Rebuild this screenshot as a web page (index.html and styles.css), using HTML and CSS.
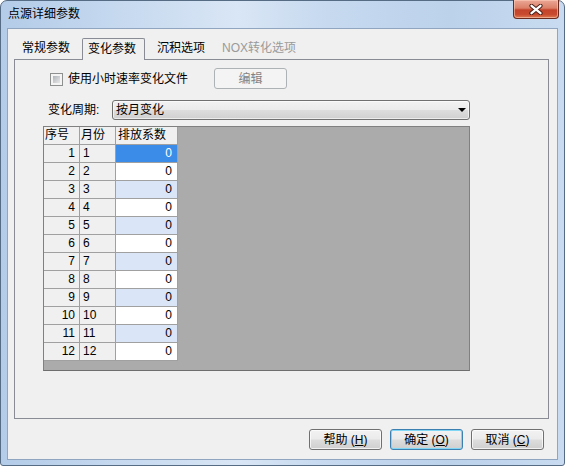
FILE: index.html
```html
<!DOCTYPE html>
<html>
<head>
<meta charset="utf-8">
<link rel="stylesheet" href="styles.css">
</head>
<body>
<div class="window">
  <div class="titlebar">
    <span class="title">点源详细参数</span>
    <div class="close">
      <svg width="14" height="11" viewBox="0 0 14 11">
        <path d="M2.5 1.8 L11.5 9.2 M11.5 1.8 L2.5 9.2" stroke="#4a1e16" stroke-width="4.2" stroke-linecap="round" fill="none"/>
        <path d="M2.5 1.8 L11.5 9.2 M11.5 1.8 L2.5 9.2" stroke="#ffffff" stroke-width="2.3" stroke-linecap="round" fill="none"/>
      </svg>
    </div>
  </div>
  <div class="client">
    <div class="tabs">
      <div class="tab t1">常规参数</div>
      <div class="tab sel">变化参数</div>
      <div class="tab t3">沉积选项</div>
      <div class="tab t4 dis">NOX转化选项</div>
    </div>
    <div class="panel">
      <div class="row1">
        <span class="check"></span>
        <span class="chklabel">使用小时速率变化文件</span>
        <div class="btn edit">编辑</div>
      </div>
      <div class="row2">
        <span class="lbl">变化周期:</span>
        <div class="combo"><span class="ctext">按月变化</span><span class="arrow"></span></div>
      </div>
      <div class="grid">
        <div class="table">
          <div class="c h">序号</div><div class="c h">月份</div><div class="c h">排放系数</div>
          <div class="c rh">1</div><div class="c m">1</div><div class="c v selv">0</div>
          <div class="c rh">2</div><div class="c m">2</div><div class="c v">0</div>
          <div class="c rh">3</div><div class="c m">3</div><div class="c v alt">0</div>
          <div class="c rh">4</div><div class="c m">4</div><div class="c v">0</div>
          <div class="c rh">5</div><div class="c m">5</div><div class="c v alt">0</div>
          <div class="c rh">6</div><div class="c m">6</div><div class="c v">0</div>
          <div class="c rh">7</div><div class="c m">7</div><div class="c v alt">0</div>
          <div class="c rh">8</div><div class="c m">8</div><div class="c v">0</div>
          <div class="c rh">9</div><div class="c m">9</div><div class="c v alt">0</div>
          <div class="c rh">10</div><div class="c m">10</div><div class="c v">0</div>
          <div class="c rh">11</div><div class="c m">11</div><div class="c v alt">0</div>
          <div class="c rh">12</div><div class="c m">12</div><div class="c v">0</div>
        </div>
      </div>
    </div>
    <div class="buttons">
      <div class="btn">帮助 (<u>H</u>)</div>
      <div class="btn def">确定 (<u>O</u>)</div>
      <div class="btn">取消 (<u>C</u>)</div>
    </div>
  </div>
</div>
</body>
</html>
```
FILE: styles.css
```css
html, body {
  margin: 0;
  padding: 0;
  background: #ffffff;
}
body {
  font-family: "Liberation Sans", "Noto Sans CJK SC", sans-serif;
  font-size: 12px;
  color: #000;
}
.window {
  width: 565px;
  height: 466px;
  box-sizing: border-box;
  border: 1px solid #566b84;
  border-radius: 7px 7px 3px 3px;
  padding: 0 6px 5px 6px;
  background: linear-gradient(90deg, #b4cce8 0%, #c3d7ee 18%, #d9e6f5 42%, #c6d9ef 58%, #bcd2eb 80%, #c8dbf0 100%);
  display: flex;
  flex-direction: column;
}
.titlebar {
  height: 27px;
  display: flex;
  justify-content: space-between;
  align-items: flex-start;
}
.title {
  margin-top: 5px;
  margin-left: 1px;
  line-height: 16px;
  color: #000;
}
.close {
  width: 46px;
  height: 19px;
  margin-top: -1px;
  margin-right: -1px;
  box-sizing: border-box;
  border: 1px solid #6b2a1e;
  border-top: none;
  border-radius: 0 0 4px 4px;
  background: linear-gradient(180deg, #e9a896 0%, #dc8068 45%, #c3442b 55%, #c84a2e 80%, #dd7a52 100%);
  box-shadow: inset 0 0 0 1px rgba(255,210,190,0.55);
  display: flex;
  align-items: center;
  justify-content: center;
}
.client {
  height: 432px;
  box-sizing: border-box;
  border: 1px solid #8fa5c0;
  background: #f0f0f0;
  display: flex;
  flex-direction: column;
}
.tabs {
  display: flex;
  align-items: flex-end;
  padding-top: 9px;
  padding-left: 8px;
  height: 21px;
}
.tab {
  height: 21px;
  line-height: 20px;
  padding: 0 6px;
  box-sizing: border-box;
  white-space: nowrap;
}
.tab.sel {
  height: 22px;
  margin-left: 6px;
  margin-bottom: -1px;
  padding: 0 8px 0 5px;
  border: 1px solid #898c95;
  border-bottom: none;
  border-radius: 2px 2px 0 0;
  background: #f0f0f0;
  position: relative;
  z-index: 1;
  line-height: 20px;
}
.tab.t3 { margin-left: 6px; }
.tab.t4 { margin-left: 5px; }
.tab.dis { color: #9a9a9a; }
.panel {
  margin-left: 6px;
  width: 535px;
  height: 360px;
  box-sizing: border-box;
  border: 1px solid #898c95;
  background: #f0f0f0;
  padding-top: 8px;
  display: flex;
  flex-direction: column;
}
.row1 {
  height: 21px;
  display: flex;
  align-items: center;
  padding-left: 35px;
}
.check {
  width: 13px;
  height: 13px;
  box-sizing: border-box;
  border: 1px solid #8e8f8f;
  padding: 2px;
  background: linear-gradient(135deg, #aeb3b9, #e8e8e8) content-box, #f4f4f4;
  margin-right: 5px;
  margin-top: 1px;
}
.chklabel {
  width: 146px;
  line-height: 16px;
  white-space: nowrap;
}
.btn {
  width: 73px;
  height: 21px;
  box-sizing: border-box;
  border: 1px solid #707070;
  border-radius: 3px;
  background: linear-gradient(180deg, #f2f2f2 0%, #ebebeb 48%, #dddddd 52%, #cfcfcf 100%);
  box-shadow: inset 0 0 0 1px rgba(255,255,255,0.7);
  display: flex;
  align-items: center;
  justify-content: center;
  line-height: 16px;
  white-space: nowrap;
}
.btn u { text-decoration: underline; }
.btn.edit {
  border-color: #adb2b5;
  background: #f4f4f4;
  box-shadow: none;
  color: #838383;
}
.btn.def {
  border-color: #3c7fb1;
  box-shadow: inset 0 0 0 1px #7fd6f5;
}
.row2 {
  margin-top: 11px;
  height: 20px;
  display: flex;
  align-items: center;
  padding-left: 33px;
}
.lbl {
  width: 64px;
  line-height: 16px;
  white-space: nowrap;
}
.combo {
  width: 358px;
  height: 20px;
  box-sizing: border-box;
  border: 1px solid #707070;
  border-radius: 3px;
  background: linear-gradient(180deg, #f2f2f2 0%, #ebebeb 48%, #dddddd 52%, #cfcfcf 100%);
  box-shadow: inset 0 0 0 1px rgba(255,255,255,0.6);
  display: flex;
  align-items: center;
  justify-content: space-between;
  padding: 0 3px 0 3px;
}
.ctext { line-height: 16px; }
.arrow {
  width: 0;
  height: 0;
  border-left: 4px solid transparent;
  border-right: 4px solid transparent;
  border-top: 4px solid #000;
}
.grid {
  margin-top: 6px;
  margin-left: 28px;
  width: 427px;
  height: 245px;
  box-sizing: border-box;
  border: 1px solid #808080;
  border-bottom-color: #6e6e6e;
  background: #ababab;
}
.table {
  display: grid;
  grid-template-columns: 36px 36px 62px;
  grid-auto-rows: 18px;
  width: 134px;
}
.c {
  box-sizing: border-box;
  border-right: 1px solid #a0a0a0;
  border-bottom: 1px solid #a0a0a0;
  line-height: 17px;
  white-space: nowrap;
  overflow: hidden;
}
.h {
  background: #f0f0f0;
  padding-left: 1px;
}
.table .h:nth-child(3) { padding-left: 2px; }
.rh {
  background: #f0f0f0;
  text-align: right;
  padding-right: 4px;
}
.m {
  background: #f0f0f0;
  padding-left: 3px;
}
.v {
  background: #ffffff;
  text-align: right;
  padding-right: 5px;
}
.v.alt { background: #dae5f7; }
.v.selv { background: #3b8ce8; color: #ffffff; }
.buttons {
  margin-top: 10px;
  display: flex;
  justify-content: flex-end;
  gap: 8px;
  padding-right: 13px;
}
```
